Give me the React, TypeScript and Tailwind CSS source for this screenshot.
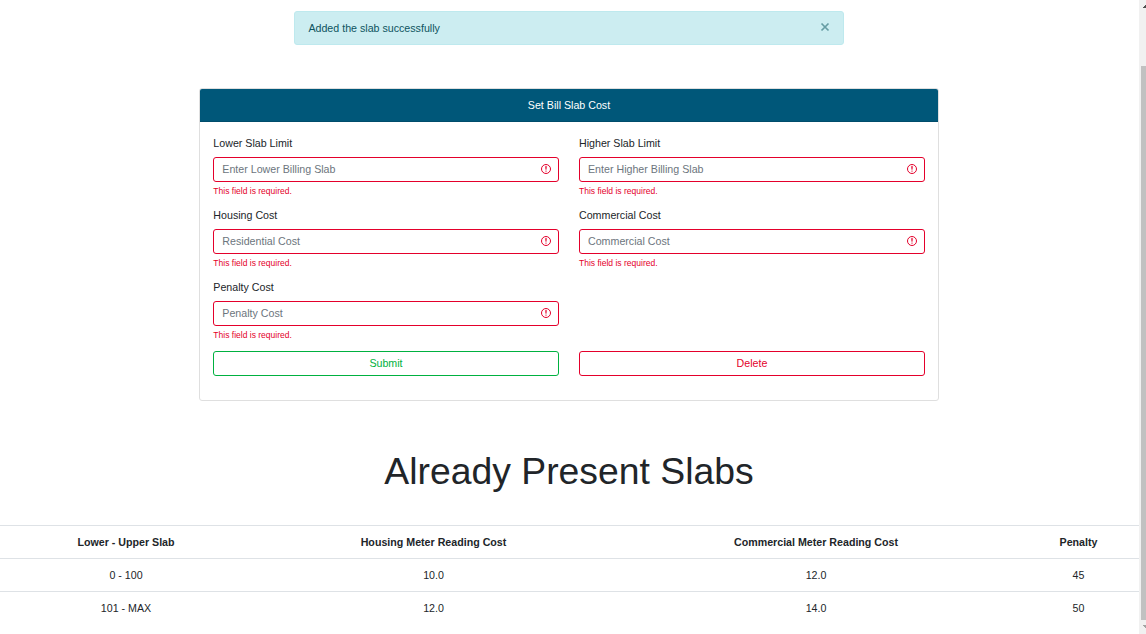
import React from "react";

function InvalidIcon() {
  return (
    <svg width="12" height="12" viewBox="0 0 12 12" className="mr-[6px] mb-px shrink-0" fill="none">
      <circle cx="6" cy="6" r="4.5" stroke="#e4002b" strokeWidth="1" />
      <path d="M5.3 3.3h1.4L6.4 6.6h-.8z" fill="#e4002b" stroke="#e4002b" strokeWidth="0.2" />
      <circle cx="6" cy="8.1" r="0.7" fill="#e4002b" />
    </svg>
  );
}

function Field({ label, placeholder }: { label: string; placeholder: string }) {
  return (
    <div className="h-[72px] odd:[--nudge:0.33px] even:[--nudge:0px]">
      <label className="block h-[22px] pl-[var(--nudge)] leading-4">{label}</label>
      <div className="flex h-[25px] items-center rounded-[3px] border border-[#e4002b] pl-[var(--nudge)]">
        <input
          placeholder={placeholder}
          className="h-full min-w-0 flex-1 bg-transparent pb-[2px] pl-2 outline-none placeholder:text-[#6c757d]"
        />
        <InvalidIcon />
      </div>
      <div className="mt-[3px] pl-[var(--nudge)] text-[8.53px] leading-[13px] text-[#e4002b]">
        This field is required.
      </div>
    </div>
  );
}

const rows = [
  ["0 - 100", "10.0", "12.0", "45"],
  ["101 - MAX", "12.0", "14.0", "50"],
];

export default function App() {
  return (
    <div className="flex h-[634px] w-[1146px] overflow-hidden bg-white font-['Liberation_Sans',Arial,sans-serif] text-[10.67px] leading-4 text-[#212529]">
      <main className="w-[1139px] shrink-0 pt-[11px]">
        <div className="ml-[294px] flex h-[34px] w-[550px] items-center justify-between rounded-[3px] border border-[#bee9ee] bg-[#ccedf1] pr-[13px] pl-[13.4px] text-[#0c5460]">
          <span>Added the slab successfully</span>
          <button aria-label="Close" className="flex pb-[2px]">
            <svg width="10" height="10" viewBox="0 0 10 10" fill="none" stroke="#669da4" strokeWidth="1.7">
              <path d="M1.5 1.5l7 7M8.5 1.5l-7 7" />
            </svg>
          </button>
        </div>

        <section className="mt-[43px] ml-[199px] h-[313px] w-[740px] rounded-[3px] border border-[#dfdfdf]">
          <h2 className="h-[33px] rounded-t-[2px] border-b border-[#004c6b] bg-[#005779] text-center leading-[32px] text-white">
            Set Bill Slab Cost
          </h2>
          <form className="grid grid-cols-2 gap-x-5 px-[13px] pt-[13px]">
            <Field label="Lower Slab Limit" placeholder="Enter Lower Billing Slab" />
            <Field label="Higher Slab Limit" placeholder="Enter Higher Billing Slab" />
            <Field label="Housing Cost" placeholder="Residential Cost" />
            <Field label="Commercial Cost" placeholder="Commercial Cost" />
            <Field label="Penalty Cost" placeholder="Penalty Cost" />
            <span />
            <button type="button" className="h-[25px] rounded-[3px] border border-[#00b140] pb-[2px] text-[#00b140]">
              Submit
            </button>
            <button type="button" className="h-[25px] rounded-[3px] border border-[#e4002b] pb-[2px] text-[#e4002b]">
              Delete
            </button>
          </form>
        </section>

        <h1 className="mt-[48px] h-[76px] pr-px text-center text-[37.33px] leading-[45px]">Already Present Slabs</h1>

        <table className="w-full table-fixed border-collapse text-center">
          <colgroup>
            <col className="w-[252px]" />
            <col className="w-[363px]" />
            <col className="w-[402px]" />
            <col className="w-[122px]" />
          </colgroup>
          <thead>
            <tr className="h-[33px] border-t border-[#dee2e6]">
              <th>Lower - Upper Slab</th>
              <th>Housing Meter Reading Cost</th>
              <th>Commercial Meter Reading Cost</th>
              <th className="pl-px">Penalty</th>
            </tr>
          </thead>
          <tbody>
            {rows.map((row) => (
              <tr key={row[0]} className="h-[33px] border-t border-[#dee2e6]">
                {row.map((cell, i) => (
                  <td key={i} className="last:pl-px">{cell}</td>
                ))}
              </tr>
            ))}
          </tbody>
        </table>
      </main>

      <div className="flex w-[7px] shrink-0 flex-col bg-[#f1f1f1] pl-[2px]">
        <div className="h-[66px]">
          <svg width="5" height="10" viewBox="0 0 5 10" shapeRendering="crispEdges">
            <path d="M2 8V7h1V6h1V5h1v3z" fill="#505050" />
          </svg>
        </div>
        <div className="h-[554px] bg-[#c1c1c1]" />
        <div className="h-[14px]">
          <svg width="5" height="10" viewBox="0 0 5 10" shapeRendering="crispEdges">
            <path d="M2 5h3v3H4V7H3V6H2z" fill="#a3a3a3" />
          </svg>
        </div>
      </div>
    </div>
  );
}
